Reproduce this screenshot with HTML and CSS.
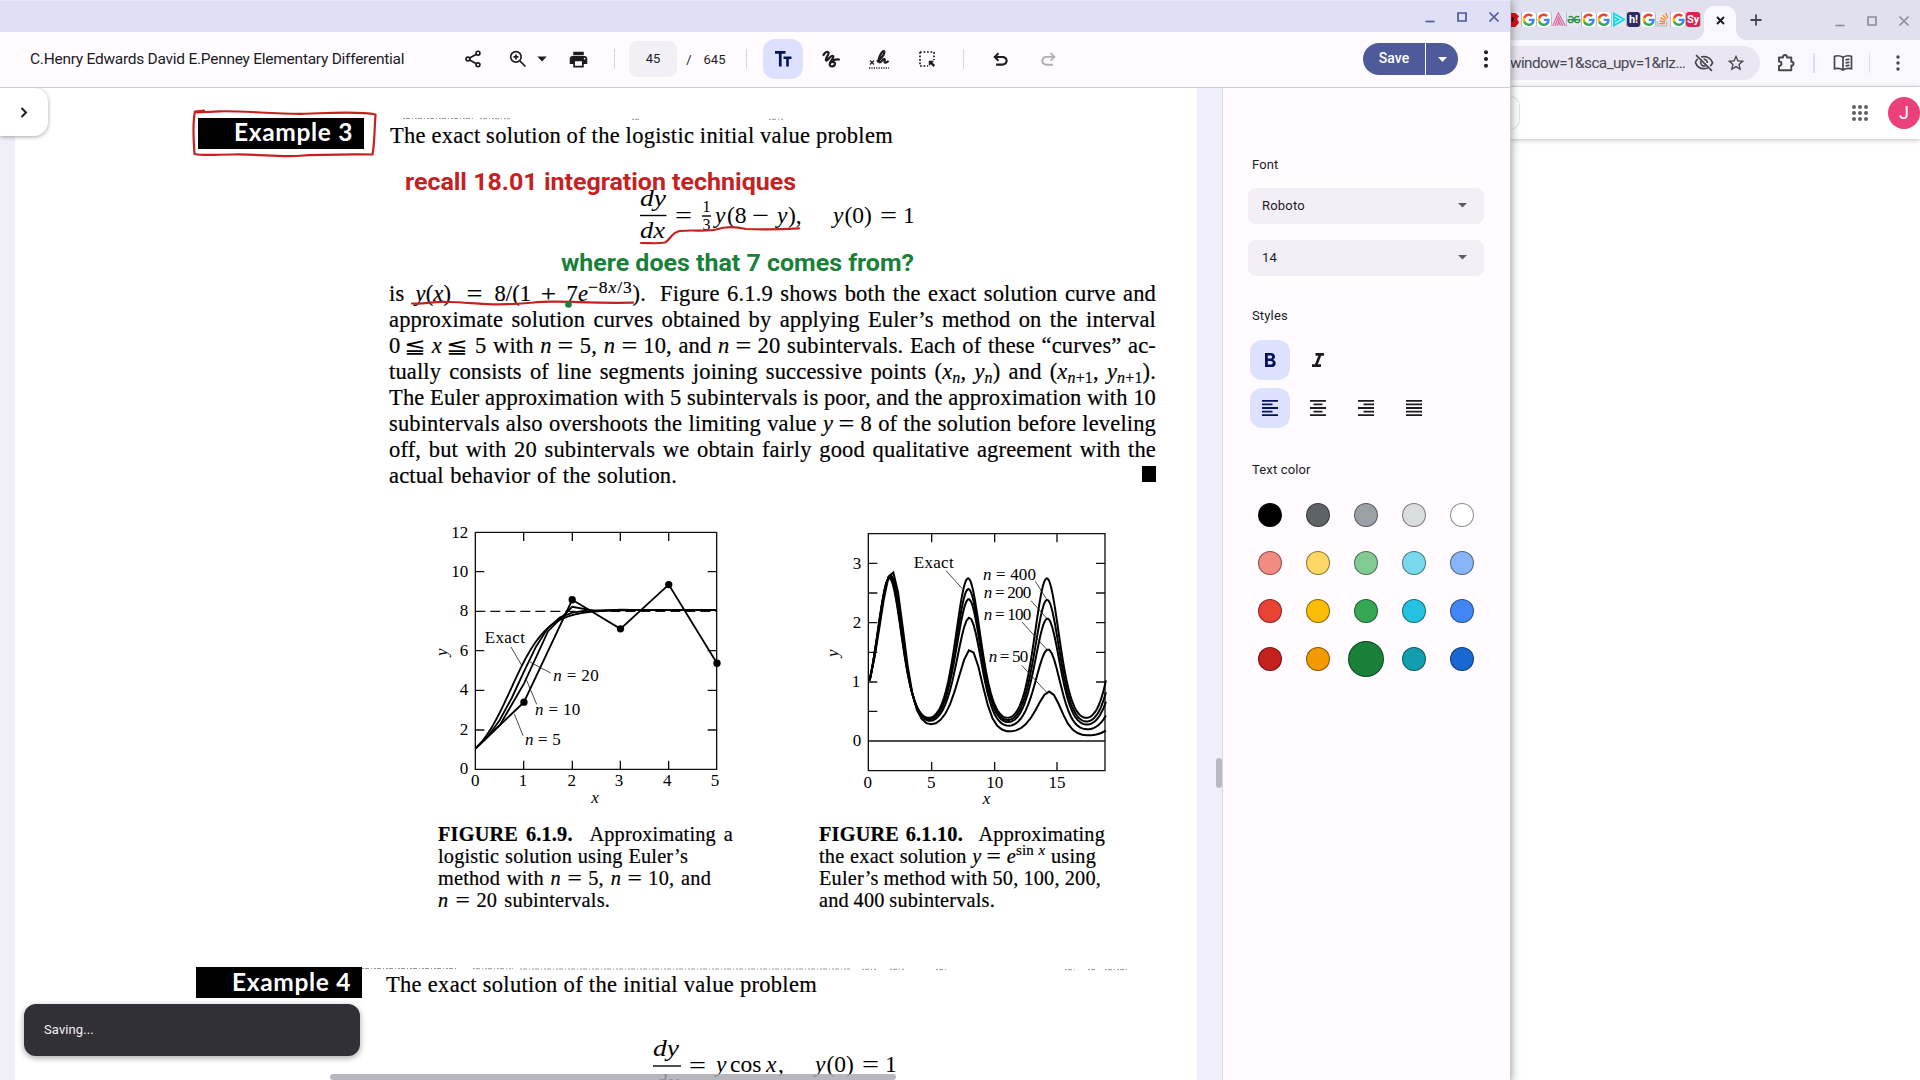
FILE: index.html
```html
<!DOCTYPE html>
<html lang="en">
<head>
<meta charset="utf-8">
<title>C.Henry Edwards David E.Penney Elementary Differential</title>
<link rel="stylesheet" href="styles.css">
</head>
<body>
<svg width="0" height="0" class="defs" aria-hidden="true">
  <symbol id="g" viewBox="0 0 48 48">
    <path fill="#4285f4" d="M45.1 24.5c0-1.6-.1-3.100-.4-4.500H24v8.500h11.800c-.5 2.700-2 5-4.400 6.600v5.500h7.100c4.200-3.800 6.600-9.500 6.600-16.100z"/>
    <path fill="#34a853" d="M24 46c5.900 0 10.900-2 14.500-5.300l-7.100-5.500c-2 1.300-4.500 2.100-7.400 2.100-5.700 0-10.500-3.900-12.300-9.100H4.300v5.700C8 41.100 15.400 46 24 46z"/>
    <path fill="#fbbc05" d="M11.700 28.200c-.4-1.300-.7-2.700-.7-4.200s.3-2.900.7-4.200v-5.700H4.300C2.900 17.100 2 20.400 2 24s.9 6.900 2.300 9.900z"/>
    <path fill="#ea4335" d="M24 10.800c3.200 0 6.100 1.100 8.400 3.300l6.300-6.300C34.900 4.200 29.900 2 24 2 15.400 2 8 6.900 4.300 14.100l7.400 5.700c1.800-5.200 6.600-9 12.300-9z"/>
  </symbol>
</svg>

<div class="desktop">
  <section class="app">
    <header class="titlebar">
      <svg class="wc" viewBox="0 0 16 16"><path d="M3.500 12.500h9" /></svg>
      <svg class="wc" viewBox="0 0 16 16"><path d="M4 4h8v8H4z"/></svg>
      <svg class="wc" viewBox="0 0 16 16"><path d="M3.500 3.500l9 9m0-9l-9 9"/></svg>
    </header>

    <div class="toolbar">
      <div class="doc-title">C.Henry Edwards David E.Penney Elementary Differential</div>
      <button class="tool"><svg width="20" height="20" viewBox="0 0 24 24" class="line"><circle cx="18" cy="5" r="2.300"/><circle cx="6" cy="12" r="2.300"/><circle cx="18" cy="19" r="2.300"/><path d="M8 10.800l8-4.600M8 13.200l8 4.600"/></svg></button>
      <button class="tool narrow zoom"><svg width="20" height="20" viewBox="0 0 24 24" class="line"><circle cx="9.500" cy="9.500" r="6.300"/><path d="M14.200 14.200L21 21M9.500 6.500v6M6.500 9.500h6"/></svg></button>
      <button class="tool narrow"><svg width="10" height="6" viewBox="0 0 10 6"><path d="M.3.500h9.400L5 5.500z"/></svg></button>
      <button class="tool"><svg width="21" height="21" viewBox="0 0 24 24"><path d="M19 8H5c-1.660 0-3 1.340-3 3v6h4v4h12v-4h4v-6c0-1.660-1.340-3-3-3zm-3 11H8v-5h8v5zm3-7c-.55 0-1-.45-1-1s.45-1 1-1 1 .45 1 1-.45 1-1 1zm-1-9H6v4h12V3z"/></svg></button>
      <i class="sep sep-a"></i>
      <span class="page-input">45</span><span class="slash">/</span><span class="total">645</span>
      <i class="sep sep-b"></i>
      <button class="tool on"><svg width="18" height="18" viewBox="0 0 18 18"><path d="M1 1h10.500v2.700H7.600V16.500H4.900V3.700H1zM9.500 6.500h8v2.500h-2.700v7.500h-2.600V9H9.500z"/></svg></button>
      <button class="tool first"><svg width="18" height="18" viewBox="0 0 18 18" class="line thick"><path d="M1.500 5C2.500 3 4.800 1 6.300 2.300c1.700 1.600-3.600 6.200-2.300 8 1.500 1.500 4.500-5.800 7-4.300 2 1.700-4 5.500-3.300 8.700.6 2.600 4.800 2.300 5.300-.7.3-2.300-3.500-2.700-5-.6M11 10.500c2-1 4-1.200 6-1"/></svg></button>
      <button class="tool"><svg width="22" height="20" viewBox="0 0 22 20" class="line"><path d="M2 11.500l4 4m0-4l-4 4" stroke-width="1.200"/><path d="M8.800 12.500C12 11 17 5.500 16.300 2.500c-.8-2.200-4.800 3.500-5.500 7.500-.5 4 1.500 4.200 3.300 1.500 1.600-2.300 3.300-1.500 2.500.6-.6 1.800.8 2.600 4-.1" stroke-width="2.200"/><path d="M1 19h20" stroke-width="1.500" stroke-dasharray="1.200 1.200" stroke-linecap="butt"/></svg></button>
      <button class="tool"><svg width="18" height="18" viewBox="0 0 18 18" class="line"><path d="M2 2h14v8M2 2v14h8" stroke-dasharray="1.800 1.700" stroke-linecap="butt" stroke-width="1.700"/><path d="M10.800 10.800h5.400l-1.700 1.800 2.600 2.700-1.600 1.600-2.700-2.700-2 1.800z" fill="currentColor" stroke="none"/></svg></button>
      <i class="sep sep-c"></i>
      <button class="tool undo"><svg width="21" height="21" viewBox="0 0 24 24"><path d="M7 19v-2.300h7.100c2.200 0 3.700-1.400 3.700-3.200s-1.500-3.200-3.700-3.200H8.200l2.300 2.300L8.900 14.200 3.800 9.100 8.900 4l1.600 1.600L8.200 8h5.900c3.500 0 6.100 2.300 6.100 5.500S17.600 19 14.100 19z"/></svg></button>
      <button class="tool dim"><svg width="21" height="21" viewBox="0 0 24 24"><path d="M17 19v-2.100H9.900c-2.300 0-3.900-1.500-3.900-3.400s1.600-3.400 3.900-3.400h6.200l-2.500 2.500 1.500 1.500L20.200 9l-5.100-5-1.500 1.500L16.100 8H9.900C6.400 8 3.800 10.300 3.800 13.500S6.400 19 9.900 19z"/></svg></button>
      <div class="save"><span>Save</span><b><svg width="9" height="5" viewBox="0 0 9 5"><path d="M0 0h9L4.500 5z"/></svg></b></div>
      <button class="tool"><svg width="4" height="18" viewBox="0 0 4 18"><circle cx="2" cy="2.300" r="2"/><circle cx="2" cy="9" r="2"/><circle cx="2" cy="15.700" r="2"/></svg></button>
    </div>

    <div class="workspace">
      <main class="viewer">
        <article class="page">
          <div class="example ex3">
            <h2>Example 3</h2>
            <p class="just">The exact solution of the logistic initial value problem</p>
          </div>

          <svg class="eq1 math" viewBox="620 180 300 70">
            <text class="i" x="640" y="206" textLength="26" lengthAdjust="spacingAndGlyphs">dy</text>
            <path d="M640 215.500h26.500"/>
            <text class="i" x="640" y="238" textLength="25" lengthAdjust="spacingAndGlyphs">dx</text>
            <text x="675" y="223" textLength="17" lengthAdjust="spacingAndGlyphs">=</text>
            <text class="s" x="702.500" y="212">1</text><path d="M702 216h9"/><text class="s" x="702.500" y="230">3</text>
            <text class="i" x="715" y="222.500">y</text><text x="727" y="222.500">(8</text>
            <text x="752" y="222.500" textLength="17" lengthAdjust="spacingAndGlyphs">−</text>
            <text class="i" x="777" y="222.500">y</text><text x="788" y="222.500">),</text>
            <text class="i" x="833" y="222.500">y</text><text x="844.500" y="222.500">(0)</text>
            <text x="880" y="222.500" textLength="17" lengthAdjust="spacingAndGlyphs">=</text><text x="903" y="222.500">1</text>
          </svg>

          <div class="para">
            <div class="line"><p class="just lead">is <i>y</i>(<i>x</i>) <span class="eq">=</span> 8/(1 <span class="plus-op">+</span> 7<i>e</i><sup>−8<i>x</i>/3</sup>).</p><p class="just rest">Figure 6.1.9 shows both the exact solution curve and</p></div>
            <p class="just">approximate solution curves obtained by applying Euler’s method on the interval</p>
            <div class="line"><p class="just ineq">0 <span class="leq">≦</span> <i>x</i> <span class="leq">≦</span></p><p class="just grow">5 with <i>n</i> <span class="eq">=</span> 5, <i>n</i> <span class="eq">=</span> 10, and <i>n</i> <span class="eq">=</span> 20 subintervals. Each of these “curves” ac-</p></div>
            <p class="just">tually consists of line segments joining successive points (<i>x<sub>n</sub></i>, <i>y<sub>n</sub></i>) and (<i>x<sub>n</sub></i><sub>+1</sub>, <i>y<sub>n</sub></i><sub>+1</sub>).</p>
            <p class="just">The Euler approximation with 5 subintervals is poor, and the approximation with 10</p>
            <p class="just">subintervals also overshoots the limiting value <i>y</i> <span class="eq">=</span> 8 of the solution before leveling</p>
            <p class="just">off, but with 20 subintervals we obtain fairly good qualitative agreement with the</p>
            <div class="line last"><p class="just end">actual behavior of the solution.</p><i class="qed"></i></div>
          </div>

          <div class="figures">
            <svg class="fig fig1" viewBox="0 0 960 900">
              <path class="frame" d="M166 67H890V778H166zM311 67v26M311 778v-26M457 67v26M457 778v-26M601 67v26M601 778v-26M746 67v26M746 778v-26M166 185h27M890 185h-27M166 422h27M890 422h-27M166 541h27M890 541h-27M166 660h27M890 660h-27"/>
              <path class="dash" d="M166 304H890"/>
              <g id="logistic"></g>
              <path class="lead-line" d="M273 411l32 55M392 489l-62-33M350 583l-30-72M309 677l-26-65"/>
              <g class="t">
                <g text-anchor="end"><text x="145" y="83">12</text><text x="145" y="201">10</text><text x="145" y="319">8</text><text x="145" y="437">6</text><text x="145" y="556">4</text><text x="145" y="674">2</text><text x="145" y="792">0</text></g>
                <g text-anchor="middle"><text x="166" y="828">0</text><text x="309" y="828">1</text><text x="455" y="828">2</text><text x="597" y="828">3</text><text x="742" y="828">4</text><text x="885" y="828">5</text></g>
                <text x="194" y="398" textLength="121">Exact</text>
                <text x="400" y="514" textLength="136"><tspan class="i">n</tspan> = 20</text>
                <text x="345" y="615" textLength="136"><tspan class="i">n</tspan> = 10</text>
                <text x="315" y="706" textLength="107"><tspan class="i">n</tspan> = 5</text>
                <text class="i" x="514" y="878">x</text>
                <text class="i" transform="translate(81 438) rotate(-90)">y</text>
              </g>
            </svg>
            <svg class="fig fig2" viewBox="0 0 990 900">
              <path class="frame" d="M205 71H915V782H205zM205 693H915M395 71v26M395 782v-26M584 71v26M584 782v-26M771 71v26M771 782v-26M205 160h27M915 160h-27M205 249h27M915 249h-27M205 338h27M915 338h-27M205 427h27M915 427h-27M205 516h27M915 516h-27M205 604h27"/>
              <g id="oscillating"></g>
              <path class="lead-line" d="M438 182l49 54M706 214l36 57M693 272l48 54M666 336l75 83M665 466l75 81"/>
              <g class="t">
                <g text-anchor="end"><text x="184" y="176">3</text><text x="184" y="353">2</text><text x="181" y="530">1</text><text x="184" y="707">0</text></g>
                <g text-anchor="middle"><text x="203" y="833">0</text><text x="394" y="833">5</text><text x="584" y="833">10</text><text x="771" y="833">15</text></g>
                <text x="341" y="174" textLength="120">Exact</text>
                <text x="549" y="211" textLength="159"><tspan class="i">n</tspan> = 400</text>
                <text x="551" y="265" textLength="143"><tspan class="i">n</tspan> = 200</text>
                <text x="551" y="329" textLength="143"><tspan class="i">n</tspan> = 100</text>
                <text x="566" y="456" textLength="119"><tspan class="i">n</tspan> = 50</text>
                <text class="i" x="548" y="882">x</text>
                <text class="i" transform="translate(113 441) rotate(-90)">y</text>
              </g>
            </svg>
          </div>

          <div class="captions">
            <div class="caption cap1">
              <p class="just w294"><b>FIGURE 6.1.9.</b><span class="gap"></span> Approximating a</p>
              <p class="just w249">logistic solution using Euler’s</p>
              <p class="just w272">method with <i>n</i> <span class="eq">=</span> 5, <i>n</i> <span class="eq">=</span> 10, and</p>
              <p class="just w171"><i>n</i> <span class="eq">=</span> 20 subintervals.</p>
            </div>
            <div class="caption cap2">
              <p class="just w285"><b>FIGURE 6.1.10.</b><span class="gap"></span> Approximating</p>
              <p class="just w276">the exact solution <i>y</i> <span class="eq">=</span> <i>e</i><sup>sin <i>x</i></sup> using</p>
              <p class="just w281">Euler’s method with 50, 100, 200,</p>
              <p class="just w175">and 400 subintervals.</p>
            </div>
          </div>

          <div class="example ex4">
            <h2>Example 4</h2>
            <p class="just">The exact solution of the initial value problem</p>
          </div>

          <svg class="eq2 math" viewBox="640 1030 300 50">
            <text class="i" x="653" y="1056" textLength="26" lengthAdjust="spacingAndGlyphs">dy</text>
            <path d="M653 1066h28"/>
            <text class="i" x="654" y="1090" textLength="25" lengthAdjust="spacingAndGlyphs">dx</text>
            <text x="689" y="1073" textLength="17" lengthAdjust="spacingAndGlyphs">=</text>
            <text class="i" x="716" y="1072">y</text><text x="730" y="1072">cos</text><text class="i" x="766" y="1072">x</text><text x="778" y="1072">,</text>
            <text class="i" x="815" y="1072">y</text><text x="826.500" y="1072">(0)</text>
            <text x="862" y="1072" textLength="17" lengthAdjust="spacingAndGlyphs">=</text><text x="885" y="1072">1</text>
          </svg>
        </article>

        <svg class="ink" viewBox="0 88 1222 992">
          <path class="scan" d="M403 118.500h72M480 118.700h30M632 119.300h9M769 119.300h14M362 968.500h95M473 968.700h40M520 969h330M862 969.300h14M890 969.300h15M936 969.600h10M1065 969.600h12M1088 969.600h8M1105 969.600h22" />
          <path class="red" d="M204 110.500L195 111.500C192.500 122 193.500 140 194.500 154c10 2 25 .3 40 .5 25-.5 40 2.500 62 1.500 30-2 50-1.500 76-1.500 2-10 2-26 3-40-15-3.500-45-1.500-74-.7-30 .2-55-3-82-2.500L197 112.500"/>
          <path class="red" d="M641 243c10 0 17 1 24-.5 5-2 6-10 15-11.500 14-1.500 25 1 36-1.500 10-3.500 20-3 30-.5 18 .8 35 .5 53-.6"/>
          <path class="red" d="M412 303.500c15 .8 18-2.200 35-1.500 20-.2 35 3.200 60 2.200 20-.3 30-2.700 45-2.500 20-.4 40 1.800 81 1"/>
          <circle cx="568.500" cy="304.500" r="3.300" fill="#188038"/>
          <text class="note" fill="#c5221f" x="405" y="189.500" textLength="391" lengthAdjust="spacingAndGlyphs">recall 18.01 integration techniques</text>
          <text class="note" fill="#188038" x="561" y="270.500" textLength="353" lengthAdjust="spacingAndGlyphs">where does that 7 comes from?</text>
        </svg>
        <button class="expand"><svg width="8" height="11" viewBox="0 0 8 11"><path d="M1.500 1l4.500 4.500L1.500 10" fill="none" stroke="#1c1b1f" stroke-width="2"/></svg></button>
        <i class="vthumb"></i><i class="hthumb"></i>
        <div class="toast">Saving...</div>
      </main>

      <aside class="panel">
        <h3>Font</h3>
        <div class="select">Roboto<svg width="9" height="5" viewBox="0 0 9 5"><path d="M0 0h9L4.500 4.500z"/></svg></div>
        <div class="select">14<svg width="9" height="5" viewBox="0 0 9 5"><path d="M0 0h9L4.500 4.500z"/></svg></div>
        <h3 class="h-styles">Styles</h3>
        <div class="row">
          <button class="fmt on"><svg width="18" height="18" viewBox="0 0 18 18"><path fill-rule="evenodd" d="M4 2h5.800c2.600 0 4.200 1.500 4.200 3.700 0 1.400-.8 2.500-2 3 1.600.5 2.700 1.800 2.700 3.500 0 2.500-1.800 3.900-4.500 3.900H4zM6.800 4.500v3.100h2.600c1.100 0 1.700-.6 1.700-1.500s-.6-1.600-1.700-1.600zm0 5.500v3.600h2.900c1.300 0 2-.7 2-1.800s-.7-1.800-2-1.800z"/></svg></button>
          <button class="fmt"><svg width="18" height="18" viewBox="0 0 18 18"><path d="M6.500 2H15v2.700h-2.800L8.900 13.300H12V16H3v-2.700h3L9.300 4.700H6.500z"/></svg></button>
        </div>
        <div class="row">
          <button class="fmt on"><svg width="16" height="16" viewBox="0 0 16 16"><path d="M0 0h16v1.800H0zM0 3.550h10.500v1.800H0zM0 7.100h16v1.800H0zM0 10.650h10.500v1.800H0zM0 14.200h16V16H0z"/></svg></button>
          <button class="fmt"><svg width="16" height="16" viewBox="0 0 16 16"><path d="M0 0h16v1.800H0zM3.500 3.550h9v1.800h-9zM0 7.100h16v1.800H0zM3.500 10.650h9v1.800h-9zM0 14.200h16V16H0z"/></svg></button>
          <button class="fmt"><svg width="16" height="16" viewBox="0 0 16 16"><path d="M0 0h16v1.800H0zM5.500 3.550H16v1.800H5.500zM0 7.100h16v1.800H0zM5.500 10.650H16v1.800H5.500zM0 14.200h16V16H0z"/></svg></button>
          <button class="fmt"><svg width="16" height="16" viewBox="0 0 16 16"><path d="M0 0h16v1.800H0zM0 3.550h16v1.800H0zM0 7.100h16v1.800H0zM0 10.650h16v1.800H0zM0 14.200h16V16H0z"/></svg></button>
        </div>
        <h3 class="h-color">Text color</h3>
        <div class="swatches">
          <i class="c1"></i><i class="c2"></i><i class="c3"></i><i class="c4"></i><i class="c5"></i>
          <i class="c6"></i><i class="c7"></i><i class="c8"></i><i class="c9"></i><i class="c10"></i>
          <i class="c11"></i><i class="c12"></i><i class="c13"></i><i class="c14"></i><i class="c15"></i>
          <i class="c16"></i><i class="c17"></i><i class="c18 picked"></i><i class="c19"></i><i class="c20"></i>
        </div>
      </aside>
    </div>
  </section>

  <section class="browser">
    <div class="tabs">
      <div class="favs">
        <svg viewBox="0 0 15 16"><path fill="#d3131b" d="M0 1h9l4 3.500-2 3 2 4L9 16H0z"/><circle cx="4.500" cy="8" r="3" fill="#500"/><path d="M4 2v12" stroke="#f33" stroke-width="1.500"/></svg>
        <span class="w"><svg viewBox="0 0 48 48"><use href="#g"/></svg></span>
        <span class="w"><svg viewBox="0 0 48 48"><use href="#g"/></svg></span>
        <svg viewBox="0 0 15 16" fill="none" stroke="#d770a3" stroke-width="1.400"><path d="M.8 15L6.800.800 14.300 15M3.300 15L7 5.300 11.700 15M5.800 15l1.400-5 2 5"/></svg>
        <svg viewBox="0 0 15 16" fill="none" stroke="#2f8d46" stroke-width="1.500"><path d="M1.800 5.600C4 3.800 6.900 5 6.900 8s-2.700 4-4.400 3S1.300 8.300 1.500 8.200h12c.2.100.7 1.800-1 2.800s-4.400 0-4.400-3 2.900-4.200 5.100-2.400"/></svg>
        <span class="w"><svg viewBox="0 0 48 48"><use href="#g"/></svg></span>
        <span class="w"><svg viewBox="0 0 48 48"><use href="#g"/></svg></span>
        <svg viewBox="0 0 15 16" fill="#d9fbff" stroke="#12d6f5" stroke-width="2"><path d="M2 1.500L13 8 2 14.500zM2 11l5-3-5-3"/></svg>
        <span class="hack">h!</span>
        <span class="w"><svg viewBox="0 0 48 48"><use href="#g"/></svg></span>
        <svg viewBox="0 0 15 16" fill="none" stroke="#f48024" stroke-width="1.400"><path d="M1.500 10v4.800h10V10" stroke="#bcbbbb"/><path d="M3.500 12.500h6M3.700 9.500l6 1.200M4.800 6.300l5.400 2.800M7 3.300l4.300 4.300M10.500 1l2.300 5.200"/></svg>
        <span class="w"><svg viewBox="0 0 48 48"><use href="#g"/></svg></span>
        <span class="sy">Sy</span>
      </div>
      <div class="tab"><svg width="9" height="9" viewBox="0 0 9 9"><path d="M1 1l7 7m0-7L1 8" stroke="#1c1b1f" stroke-width="1.900"/></svg></div>
      <svg class="plus" width="12" height="12" viewBox="0 0 12 12"><path d="M6 .5v11M.5 6h11" stroke="#46464f" stroke-width="1.800"/></svg>
      <div class="controls">
        <svg class="wc" viewBox="0 0 16 16"><path d="M3.500 12.500h9" /></svg>
        <svg class="wc" viewBox="0 0 16 16"><path d="M4 4h8v8H4z"/></svg>
        <svg class="wc" viewBox="0 0 16 16"><path d="M3.500 3.500l9 9m0-9l-9 9"/></svg>
      </div>
    </div>
    <div class="address">
      <div class="url"><span>window=1&amp;sca_upv=1&amp;rlz…</span>
        <svg width="20" height="20" viewBox="0 0 24 24" class="line"><path d="M4.500 7C3 8.300 2 10 1.700 11.500 3.500 16 7.500 18.800 12 18.800c1.500 0 3-.3 4.300-.9M8.500 4.900C9.600 4.500 10.800 4.300 12 4.300c4.500 0 8.500 2.800 10.300 7.200-.6 1.600-1.600 3-2.900 4.200M2.500 2.500l19 19"/><path d="M8.300 9.800a4.200 4.200 0 0 0 5.500 5.500M11.500 7.500a4.200 4.200 0 0 1 4.500 4.500"/></svg>
        <svg width="20" height="20" viewBox="0 0 24 24"><path d="M22 9.240l-7.190-.62L12 2 9.190 8.630 2 9.240l5.460 4.730L5.820 21 12 17.270 18.180 21l-1.630-7.030L22 9.240zM12 15.400l-3.760 2.270 1-4.280-3.320-2.880 4.380-.38L12 6.100l1.710 4.040 4.380.38-3.320 2.880 1 4.280L12 15.400z"/></svg>
      </div>
      <svg class="ext" width="20" height="20" viewBox="0 0 20 20"><path d="M3 4.500h4c0-3.300 4-3.300 4 0h4.300v4.300c3 0 3 3.700 0 3.700v4.700H3v-4.300c3.300 0 3.300-4.400 0-4.400z" fill="none" stroke="currentColor" stroke-width="1.900" stroke-linejoin="round"/></svg>
      <i></i>
      <svg class="book" width="20" height="18" viewBox="0 0 20 18"><path d="M10 3.300C7.500 1.700 4 1.500 1.500 2.300v12.500c2.800-.7 6-.4 8.500 1.200 2.500-1.600 5.700-1.900 8.500-1.200V2.300C16 1.500 12.500 1.700 10 3.300zV16M12.500 6c1.300-.5 2.700-.7 4-.5M12.500 9c1.300-.5 2.700-.7 4-.5M12.500 12c1.300-.5 2.700-.7 4-.5" fill="none" stroke="currentColor" stroke-width="1.700"/></svg>
      <i></i>
      <svg class="kebab" width="4" height="16" viewBox="0 0 4 16"><circle cx="2" cy="2" r="1.700"/><circle cx="2" cy="8" r="1.700"/><circle cx="2" cy="14" r="1.700"/></svg>
    </div>
    <div class="google">
      <i class="pill"></i>
      <svg class="apps" width="16" height="16" viewBox="0 0 16 16"><circle cx="2" cy="2" r="2"/><circle cx="8" cy="2" r="2"/><circle cx="14" cy="2" r="2"/><circle cx="2" cy="8" r="2"/><circle cx="8" cy="8" r="2"/><circle cx="14" cy="8" r="2"/><circle cx="2" cy="14" r="2"/><circle cx="8" cy="14" r="2"/><circle cx="14" cy="14" r="2"/></svg>
      <span class="avatar">J</span>
    </div>
  </section>
</div>
<script src="plots.js"></script>
</body>
</html>
```
FILE: styles.css
```css
* { box-sizing: border-box; }
body { margin: 0; width: 1920px; height: 1080px; overflow: hidden; background: #fff; font-family: Roboto, "Liberation Sans", sans-serif; color: #1c1b1f; }
p, h2, h3 { margin: 0; font-weight: normal; }
button { border: 0; padding: 0; background: none; color: inherit; font: inherit; }
svg { display: block; flex: none; }
svg.defs { position: absolute; }
svg.line { fill: none; stroke: currentColor; stroke-width: 2; }
svg.thick { stroke-width: 2.2; stroke-linecap: round; }

.desktop { display: grid; grid-template-columns: 1510px 410px; height: 1080px; }
.app { position: relative; z-index: 1; display: flex; flex-direction: column; height: 1080px; background: #fffbff; box-shadow: 0 0 0 1px #c9c8d0, 2px 1px 8px rgba(0,0,0,.35); }

.titlebar { height: 32px; background: #dfe0f8; border-top: 1px solid #e9e9fa; display: flex; justify-content: flex-end; align-items: center; gap: 16px; padding-right: 8px; color: #4e5998; }
.wc { width: 16px; height: 16px; fill: none; stroke: currentColor; stroke-width: 1.7; }

.toolbar { height: 56px; border-bottom: 1px solid #cfcdd5; display: flex; align-items: center; flex: none; padding-bottom: 1px; }
.toolbar svg { fill: currentColor; }
.toolbar svg.line { fill: none; }
.doc-title { width: 449px; padding: 0 0 0 30px; font-size: 15.5px; white-space: nowrap; letter-spacing: -.26px; flex: none; }
.tool { width: 48px; height: 40px; display: flex; align-items: center; justify-content: center; flex: none; }
.tool.narrow { width: 24.5px; }
.tool.zoom { margin-left: 8.5px; }
.tool.on { width: 40px; border-radius: 12px; background: #dde1ff; color: #04145b; }
.tool.first { margin-left: 4px; }
.tool.undo { margin-left: 12px; }
.tool.dim { color: #b0adb3; }
.sep { width: 1px; height: 20px; background: #d8d5dc; }
.sep-a { margin: 0 14px 0 11.5px; }
.sep-b { margin: 0 16px 0 18px; }
.sep-c { margin-left: 12px; }
.page-input { width: 48px; height: 36px; border-radius: 8px; background: #f2eff7; line-height: 35px; text-align: center; font-size: 13px; }
.slash, .total { width: 24px; text-align: center; font-size: 13px; }
.total { width: 27px; }
.save { margin: 0 4px 0 auto; width: 95px; height: 32px; border-radius: 16px; background: #4e5a9a; color: #fff; display: flex; overflow: hidden; font-size: 14px; font-weight: 500; line-height: 31px; }
.save span { width: 63px; text-align: center; border-right: 1px solid #fff; }
.save b { flex: 1; display: flex; align-items: center; justify-content: center; }

.workspace { flex: 1; display: flex; height: 992px; }
.viewer { position: relative; width: 1222px; height: 992px; overflow: hidden; background: #f0eefa; padding-left: 15px; }
.page { width: 1182px; height: 992px; background: #fff; overflow: hidden; color: #000; font-family: "Liberation Serif", serif; font-size: 22.5px; line-height: 26px; -webkit-text-stroke: .2px #000; }
.just { text-align: justify; text-align-last: justify; white-space: nowrap; word-spacing: -2px; letter-spacing: .15px; }
.page sub, .page sup { line-height: 0; font-size: 16px; }
.page sup { vertical-align: 8px; }
.page sub { vertical-align: -4px; }

.example { display: flex; height: 31px; }
.example h2 { width: 166px; background: #000; color: #fff; -webkit-text-stroke: 0; font: bold 24.5px/28px Lato, sans-serif; letter-spacing: .65px; padding-right: 11px; text-align: right; white-space: nowrap; }
.example p { line-height: 31px; margin: 1.500px 0 0 26px; width: 503px; letter-spacing: .3px; }
.ex3 { margin: 30px 0 0 183px; }
.ex4 { margin: 56px 0 0 181px; }
.ex4 h2 { line-height: 30px; }
.ex4 p { width: 431px; margin: 2px 0 0 24px; }

.math { font-size: 23.5px; fill: #000; }
.math path { stroke: #000; stroke-width: 1.4; }
.math .i, .t .i { font-style: italic; }
.math .s { font-size: 16px; }
.eq1 { width: 300px; height: 70px; margin: 31px 0 0 605px; }
.eq2 { width: 300px; height: 50px; margin: 32px 0 0 625px; }

.para { width: 767px; margin: 31px 0 0 374px; }
.para > p, .para .line { height: 26px; }
.para .line { display: flex; }
.lead { width: 257px; }
.lead sup { font-size: 17.5px; letter-spacing: .9px; }
.lead .eq { margin: 0 2px 0 6px; }
.rest { width: 496px; margin-left: 14px; }
.ineq { width: 77px; }
.grow { flex: 1; margin-left: 9px; }
.leq { display: inline-block; font-size: 20px; line-height: 20px; transform: scaleX(1.3); -webkit-text-stroke: 0; }
.plus-op { display: inline-block; transform: scaleX(1.2); }
.end { width: 288px; }
.last { justify-content: space-between; }
.qed { width: 14px; height: 16px; background: #000; margin-top: 3px; }
.eq { display: inline-block; transform: scaleX(1.25); margin: 0 1px; }

.figures { display: flex; margin: 21px 0 0 405px; gap: 60px; height: 300px; -webkit-text-stroke: 0; }
.fig1 { width: 320px; height: 300px; }
.fig2 { width: 330px; height: 300px; }
.frame { fill: none; stroke: #111; stroke-width: 4; }
.dash { stroke: #111; stroke-width: 3.500; stroke-dasharray: 30 15; }
.curve { fill: none; stroke: #000; stroke-width: 5.500; }
.fig2 .curve { stroke-width: 6; }
.lead-line { fill: none; stroke: #222; stroke-width: 2.500; }
.t { font-size: 51px; fill: #000; }

.captions { display: flex; margin: 13px 0 0 423px; font-size: 20.3px; line-height: 22px; height: 88px; }
.cap1 { width: 381px; }
.captions p { height: 22px; letter-spacing: .2px; }
.captions b { letter-spacing: .2px; }
.captions sup { font-size: 15px; }
.gap { display: inline-block; width: 10px; }
.w294 { width: 295px; } .w249 { width: 250px; } .w272 { width: 273px; } .w171 { width: 172px; }
.w285 { width: 286px; } .w276 { width: 277px; } .w281 { width: 282px; } .w175 { width: 176px; }

.ink { position: absolute; left: 0; top: 0; width: 1222px; height: 992px; }
.red { fill: none; stroke: #c5221f; stroke-width: 2.200; stroke-linejoin: round; stroke-linecap: round; }
.scan { stroke: #999; stroke-width: 1; stroke-dasharray: 2 1 4 2 1 2; }
.note { font-family: Roboto, sans-serif; font-weight: 700; font-size: 24px; }

.expand { position: absolute; left: 0; top: 0; width: 48px; height: 48px; border-radius: 0 14px 14px 0; background: #fff; box-shadow: 0 1px 4px rgba(0,0,0,.35); display: flex; align-items: center; justify-content: center; }
.vthumb { position: absolute; left: 1216px; top: 670px; width: 6px; height: 30px; border-radius: 3px; background: #b9b8c3; }
.hthumb { position: absolute; left: 330px; top: 986px; width: 566px; height: 6px; border-radius: 3px; background: rgba(172,170,181,.85); }
.toast { position: absolute; left: 24px; top: 916px; width: 336px; height: 52px; border-radius: 12px; background: #313036; color: #f3eff4; font-size: 13px; letter-spacing: .1px; line-height: 52px; padding-left: 20px; box-shadow: 0 2px 6px rgba(0,0,0,.35); }

.panel { width: 288px; border-left: 1px solid #d9d6df; padding: 66px 0 0 25px; font-size: 13px; }
.panel h3 { height: 22px; line-height: 22px; padding-left: 4px; font-size: 13px; letter-spacing: .15px; }
.select { width: 236px; height: 36px; margin: 12px 0 16px; border-radius: 8px; background: #f2eff7; display: flex; align-items: center; justify-content: space-between; padding: 0 17px 1px 14px; letter-spacing: .2px; }
.select svg { fill: #5d5c68; }
.select + .select { margin: 0; }
.panel .h-styles { margin: 29px 0 13px; }
.row { display: flex; gap: 8px; margin: 0 0 8px 2px; }
.fmt { width: 40px; height: 40px; border-radius: 12px; display: flex; align-items: center; justify-content: center; }
.fmt.on { background: #dde1ff; color: #04145b; }
.fmt svg { fill: currentColor; }
.panel .h-color { margin: 31px 0 10px; }
.swatches { display: grid; grid-template-columns: repeat(5, 48px); grid-auto-rows: 48px; place-items: center; margin-left: -2px; }
.swatches i { width: 24px; height: 24px; border-radius: 50%; border: 1px solid rgba(0,0,0,.45); background-clip: border-box; }
.swatches .picked { width: 36px; height: 36px; }
.c1 { background: #000; } .c2 { background: #5f6368; } .c3 { background: #9aa0a6; } .c4 { background: #dadce0; } .c5 { background: #fff; }
.c6 { background: #f28b82; } .c7 { background: #fdd663; } .c8 { background: #81c995; } .c9 { background: #78d9ec; } .c10 { background: #8ab4f8; }
.c11 { background: #ea4335; } .c12 { background: #fbbc04; } .c13 { background: #34a853; } .c14 { background: #24c1e0; } .c15 { background: #4285f4; }
.c16 { background: #c5221f; } .c17 { background: #f29900; } .c18 { background: #188038; } .c19 { background: #129eaf; } .c20 { background: #1967d2; }

.browser { background: #fff; }
.tabs { height: 40px; background: #e1e0ee; display: flex; align-items: flex-end; }
.favs { display: flex; height: 15px; align-self: flex-start; margin: 12px 0 0 -3px; width: 194px; }
.favs > * { width: 13.950px; height: 15px; margin-right: 1px; flex: none; background-color: #e6e6f2; box-shadow: 1px 0 #bcbcc8; }
.favs .w { background: #fff; border-radius: 3px; display: flex; align-items: center; justify-content: center; }
.favs .w svg { width: 13.500px; height: 13.500px; }
.favs .hack, .favs .sy { color: #fff; font-weight: 700; font-size: 11px; line-height: 15px; text-align: center; border-radius: 3px; }
.favs .hack { background: #2e2a5b; }
.favs .sy { background: #e0234e; }
.tab { position: relative; width: 32px; height: 34px; margin-left: 3px; margin-right: 14px; background: #faf8ff; border-radius: 10px 10px 0 0; display: flex; align-items: center; justify-content: center; padding-bottom: 6px; }
.tab::before, .tab::after { content: ""; position: absolute; bottom: 0; width: 10px; height: 10px; }
.tab::before { left: -10px; background: radial-gradient(circle at 0 0, transparent 9.500px, #faf8ff 10px); }
.tab::after { right: -10px; background: radial-gradient(circle at 100% 0, transparent 9.500px, #faf8ff 10px); }
.plus { margin-bottom: 14px; }
.controls { margin: 0 8px 11px auto; display: flex; gap: 16px; color: #8d8c98; }
.address { height: 47px; background: #faf8ff; border-bottom: 1px solid #dedde9; display: flex; align-items: center; color: #46464f; }
.address > i { width: 1.500px; height: 20px; background: #dadcfb; }
.url { width: 250px; height: 34px; border-radius: 0 17px 17px 0; background: #eae7f3; display: flex; align-items: center; font-size: 15.3px; letter-spacing: -.55px; }
.url span { width: 184px; white-space: nowrap; }
.url svg + svg { margin-left: 12px; }
.address svg { fill: currentColor; }
.address svg.line { fill: none; }
.ext { margin: 0 17px 0 16px; }
.book { margin: 0 16px 0 18px; }
.kebab { margin-left: 26px; }
.google { height: 52px; background: #fff; box-shadow: 0 1px 5px rgba(0,0,0,.25); display: flex; align-items: center; overflow: visible; }
.pill { width: 10px; height: 34px; border: 1px solid #dfe1e5; border-left: 0; border-radius: 0 17px 17px 0 / 0 17px 17px 0; }
.apps { margin-left: auto; fill: #5f6368; }
.avatar { width: 32px; height: 32px; border-radius: 50%; background: #ec407a; color: #fff; text-align: center; line-height: 32px; font-size: 18px; margin: 0 0 0 20px; }
```
FILE: plots.js
```javascript
// Draws Euler approximations next to the exact solution in each figure.
function addCurve(group, points, sx, sy) {
  const path = document.createElementNS('http://www.w3.org/2000/svg', 'path');
  path.setAttribute('class', 'curve');
  path.setAttribute('d', 'M' + points.map(([x, y]) => sx(x).toFixed(1) + ' ' + sy(y).toFixed(1)).join('L'));
  group.appendChild(path);
}

function euler(f, x0, y0, end, n) {
  const h = (end - x0) / n;
  const points = [[x0, y0]];
  let x = x0, y = y0;
  for (let k = 0; k < n; k++) {
    y += h * f(x, y);
    x += h;
    points.push([x, y]);
  }
  return points;
}

function exact(fn, end) {
  return Array.from({ length: 401 }, (_, k) => [k * end / 400, fn(k * end / 400)]);
}

const g1 = document.getElementById('logistic');
const x1 = x => 167 + 144.8 * x, y1 = y => 774 - 59.25 * y;
const logistic = (x, y) => y * (8 - y) / 3;
[5, 10, 20].forEach(n => addCurve(g1, euler(logistic, 0, 1, 5, n), x1, y1));
addCurve(g1, exact(x => 8 / (1 + 7 * Math.exp(-8 * x / 3)), 5), x1, y1);
euler(logistic, 0, 1, 5, 5).slice(1).forEach(([x, y]) => {
  const dot = document.createElementNS('http://www.w3.org/2000/svg', 'circle');
  dot.setAttribute('cx', x1(x));
  dot.setAttribute('cy', y1(y));
  dot.setAttribute('r', 11);
  g1.appendChild(dot);
});

const g2 = document.getElementById('oscillating');
const x2 = x => 209 + 37.6 * x, y2 = y => 689 - 178 * y;
const end = 6 * Math.PI;
[50, 100, 200, 400].forEach(n => addCurve(g2, euler((x, y) => y * Math.cos(x), 0, 1, end, n), x2, y2));
addCurve(g2, exact(x => Math.exp(Math.sin(x)), end), x2, y2);
```
